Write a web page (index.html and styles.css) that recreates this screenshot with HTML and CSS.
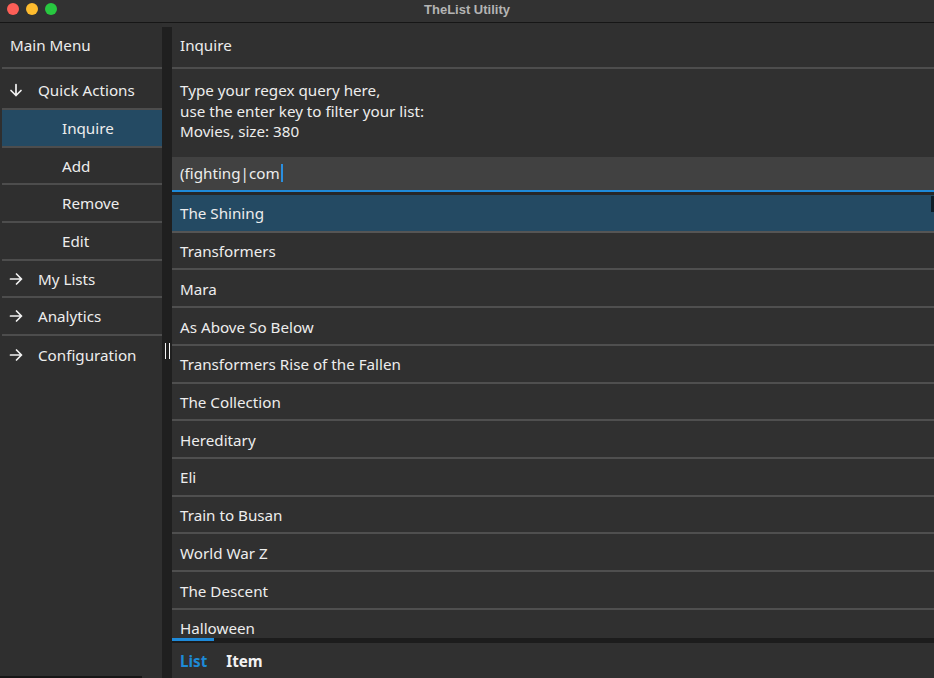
FILE: index.html
```html
<!DOCTYPE html>
<html>
<head>
<meta charset="utf-8">
<title>TheList Utility</title>
<link rel="stylesheet" href="styles.css">
</head>
<body>
<div class="window">
  <header class="titlebar">
    <div class="lights">
      <span class="light red"></span>
      <span class="light yellow"></span>
      <span class="light green"></span>
    </div>
    <div class="title">TheList Utility</div>
  </header>
  <div class="main">
    <aside class="sidebar">
      <div class="side-head">Main Menu</div>
      <div class="side-row group first">
        <svg class="arrow" viewBox="0 0 14 14"><path d="M7 1.5V12.5M2 7.5L7 12.5L12 7.5" fill="none" stroke="#f2f2f2" stroke-width="1.7" stroke-linecap="round" stroke-linejoin="round"/></svg>
        <span>Quick Actions</span>
      </div>
      <div class="side-row sub selected">Inquire</div>
      <div class="side-row sub">Add</div>
      <div class="side-row sub">Remove</div>
      <div class="side-row sub">Edit</div>
      <div class="side-row group">
        <svg class="arrow" viewBox="0 0 14 14"><path d="M1.5 7H12.5M7.5 2L12.5 7L7.5 12" fill="none" stroke="#f2f2f2" stroke-width="1.7" stroke-linecap="round" stroke-linejoin="round"/></svg>
        <span>My Lists</span>
      </div>
      <div class="side-row group">
        <svg class="arrow" viewBox="0 0 14 14"><path d="M1.5 7H12.5M7.5 2L12.5 7L7.5 12" fill="none" stroke="#f2f2f2" stroke-width="1.7" stroke-linecap="round" stroke-linejoin="round"/></svg>
        <span>Analytics</span>
      </div>
      <div class="side-row group last">
        <svg class="arrow" viewBox="0 0 14 14"><path d="M1.5 7H12.5M7.5 2L12.5 7L7.5 12" fill="none" stroke="#f2f2f2" stroke-width="1.7" stroke-linecap="round" stroke-linejoin="round"/></svg>
        <span>Configuration</span>
      </div>
      <div class="side-fill"></div>
      <div class="side-hscroll"></div>
    </aside>
    <div class="splitter"><span class="grip"></span></div>
    <section class="content">
      <div class="content-head">Inquire</div>
      <div class="desc">
        <div>Type your regex query here,</div>
        <div>use the enter key to filter your list:</div>
        <div>Movies, size: 380</div>
      </div>
      <div class="query"><span class="qtext">(fighting|com</span><span class="caret"></span></div>
      <div class="list">
        <div class="item selected">The Shining</div>
        <div class="item">Transformers</div>
        <div class="item">Mara</div>
        <div class="item">As Above So Below</div>
        <div class="item">Transformers Rise of the Fallen</div>
        <div class="item">The Collection</div>
        <div class="item">Hereditary</div>
        <div class="item">Eli</div>
        <div class="item">Train to Busan</div>
        <div class="item">World War Z</div>
        <div class="item">The Descent</div>
        <div class="item">Halloween</div>
        <div class="item">Saw</div>
        <span class="vthumb"></span>
      </div>
      <div class="tabs">
        <div class="tab active">List</div>
        <div class="tab">Item</div>
      </div>
    </section>
  </div>
</div>
</body>
</html>
```

FILE: styles.css
```css
* { box-sizing: border-box; }
html, body {
  margin: 0;
  padding: 0;
  background: #303030;
}
body {
  font-family: "Noto Sans", "Open Sans", "DejaVu Sans", sans-serif;
  font-size: 15.2px;
  color: #ededed;
}
.window {
  width: 934px;
  height: 678px;
  display: flex;
  flex-direction: column;
  overflow: hidden;
}
.titlebar {
  height: 23px;
  flex: 0 0 23px;
  background: #323232;
  border-bottom: 1px solid #161616;
  display: flex;
  align-items: center;
  justify-content: center;
  position: relative;
}
.lights {
  position: absolute;
  left: 7px;
  top: 3px;
  display: flex;
  gap: 7px;
}
.light {
  width: 12px;
  height: 12px;
  border-radius: 50%;
  display: block;
}
.red { background: #fe5f57; }
.yellow { background: #febc2e; }
.green { background: #28c840; }
.title {
  font-family: "Liberation Sans", Arial, sans-serif;
  font-weight: bold;
  font-size: 13px;
  color: #b4b4b4;
  margin-top: -3px;
}
.main {
  flex: 1;
  display: flex;
  min-height: 0;
}
.sidebar {
  width: 162px;
  flex: 0 0 162px;
  background: #2f2f2f;
  display: flex;
  flex-direction: column;
}
.side-head {
  height: 46px;
  flex: 0 0 46px;
  display: flex;
  align-items: center;
  border-bottom: 2px solid #4d4d4d;
  margin-left: 2px;
  padding-left: 8px;
}
.side-row {
  height: 37.7px;
  flex: 0 0 37.7px;
  display: flex;
  align-items: center;
  border-bottom: 2px solid #4d4d4d;
  margin-left: 2px;
}
.side-row.group {
  padding-left: 7px;
}
.side-row.first {
  height: 41px;
  flex-basis: 41px;
  padding-top: 2px;
}
.arrow {
  width: 14px;
  height: 14px;
  margin-right: 15px;
}
.side-row.sub {
  padding-left: 60px;
}
.side-row.selected {
  background: #244a63;
}
.side-row.last { border-bottom: none; }
.side-fill { flex: 1; }
.side-hscroll {
  height: 2px;
  width: 142px;
  background: #161616;
}
.splitter {
  width: 10px;
  flex: 0 0 10px;
  background: #1f1f1f;
  margin-top: 4px;
  display: flex;
  align-items: center;
  justify-content: center;
}
.grip {
  width: 5px;
  height: 16px;
  border-left: 1px solid #f4f4f4;
  border-right: 1px solid #f4f4f4;
  margin-top: -4px;
}
.content {
  flex: 1;
  min-width: 0;
  display: flex;
  flex-direction: column;
  background: #303030;
}
.content-head {
  height: 46px;
  flex: 0 0 46px;
  display: flex;
  align-items: center;
  padding-left: 8px;
  border-bottom: 2px solid #4d4d4d;
}
.desc {
  flex: 0 0 88px;
  padding: 11px 0 0 8px;
  line-height: 20.5px;
}
.query {
  flex: 0 0 35px;
  background: #414141;
  border-bottom: 2px solid #1e8ad9;
  display: flex;
  align-items: center;
  padding-left: 8px;
  padding-bottom: 2px;
}
.caret {
  width: 2px;
  height: 18px;
  background: #2a8fe0;
  margin-left: 1px;
}
.list {
  flex: 1;
  min-height: 0;
  overflow: hidden;
  border-top: 3px solid #262626;
  position: relative;
}
.item {
  height: 37.72px;
  display: flex;
  align-items: center;
  padding-left: 8px;
  padding-top: 1px;
  border-bottom: 2px solid #4f4f4f;
}
.item.selected {
  background: #244a63;
  border-bottom-color: #555;
  padding-top: 0;
}
.vthumb {
  position: absolute;
  right: 0;
  top: 1px;
  width: 3px;
  height: 16px;
  background: #0f1d27;
}
.tabs {
  flex: 0 0 40px;
  display: flex;
  align-items: center;
  gap: 19px;
  padding-left: 8px;
  border-top: 5px solid #1c1c1c;
  position: relative;
  font-weight: bold;
}
.tabs::before {
  content: "";
  position: absolute;
  left: 0;
  top: -5px;
  width: 42px;
  height: 3px;
  background: #1e8ad9;
}
.tab { color: #f2f2f2; }
.tab.active { color: #1d8ad6; }
```
